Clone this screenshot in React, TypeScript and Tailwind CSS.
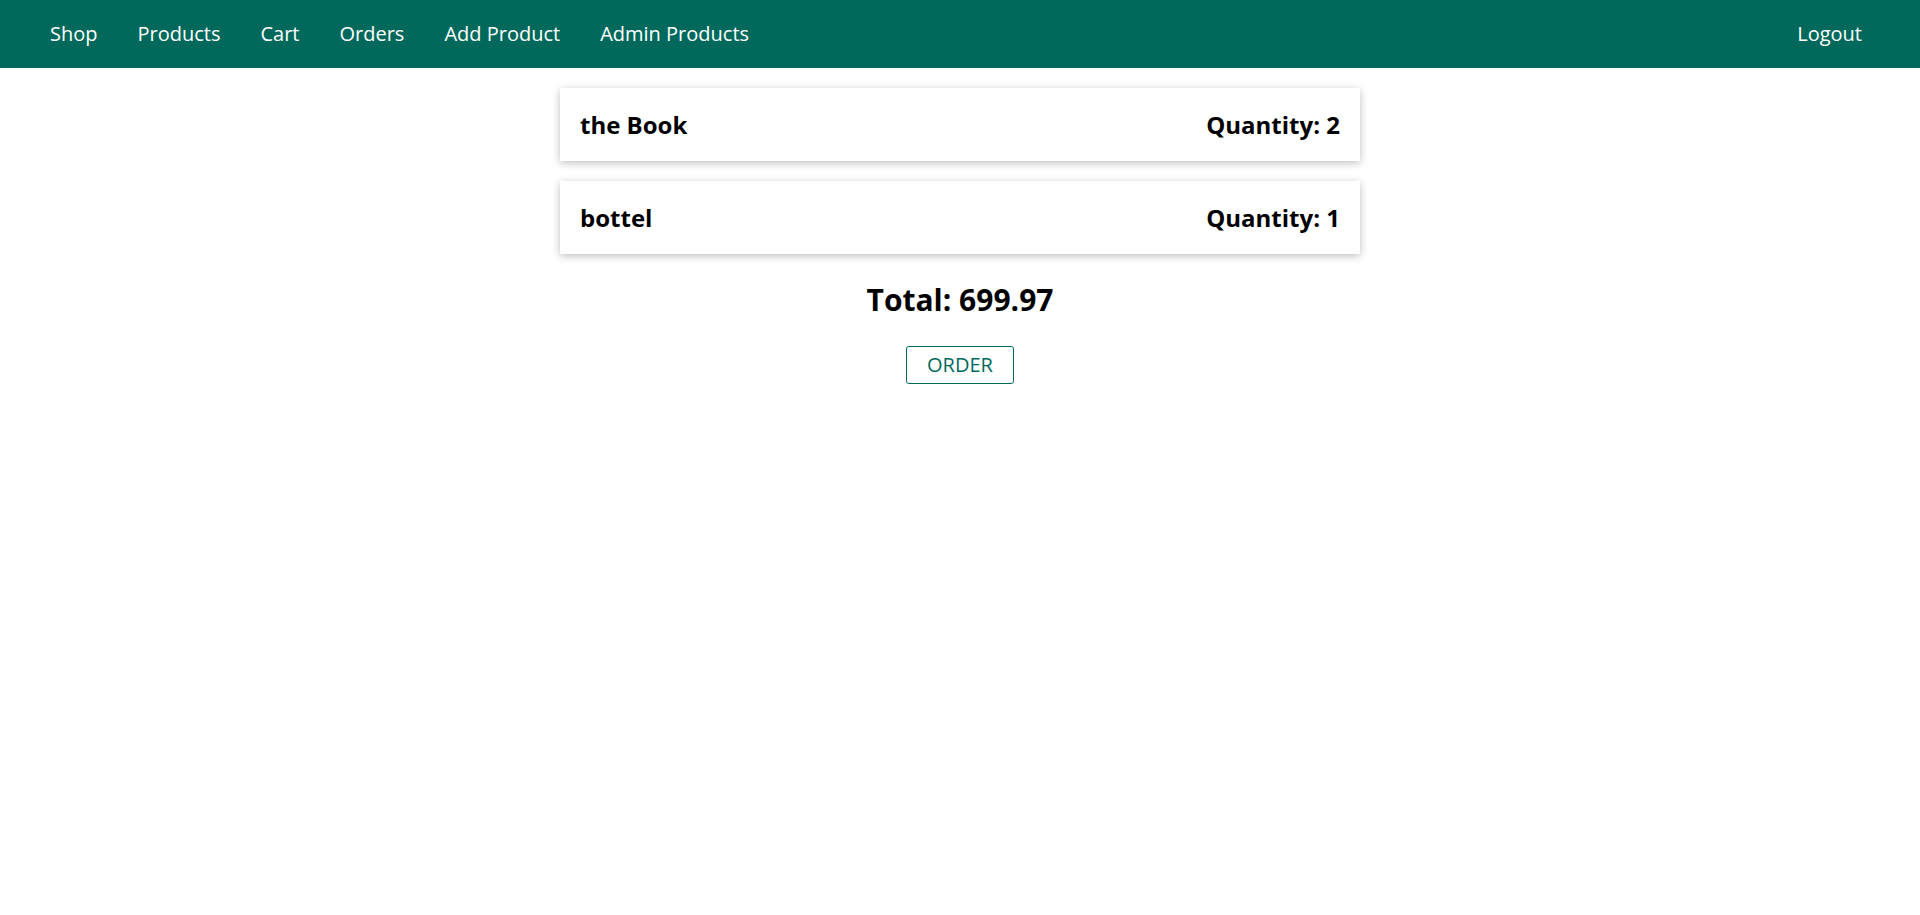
import React from 'react';

const navLinks = ['Shop', 'Products', 'Cart', 'Orders', 'Add Product', 'Admin Products'];

const cartItems = [
  { title: 'the Book', quantity: 2 },
  { title: 'bottel', quantity: 1 },
];

export default function App() {
  return (
    <div className="min-h-screen bg-white font-['Open_Sans',sans-serif] text-black">
      {/* Main header */}
      <header className="h-[68px] bg-[#00695c] flex items-center justify-between pl-[50px] pr-[58px]">
        <nav className="flex items-center gap-10">
          {navLinks.map((link) => (
            <a key={link} href="#" className="text-white text-[20px]">
              {link}
            </a>
          ))}
        </nav>
        <a href="#" className="text-white text-[20px]">
          Logout
        </a>
      </header>

      <main className="flex flex-col items-center">
        <ul className="w-[800px] mt-5 flex flex-col gap-5">
          {cartItems.map((item) => (
            <li
              key={item.title}
              className="h-[73px] flex items-center justify-between px-5 bg-white shadow-[0_2px_8px_rgba(0,0,0,0.26)]"
            >
              <h1 className="text-[24px] leading-[32px] font-bold">{item.title}</h1>
              <h2 className="text-[24px] leading-[32px] font-bold">Quantity: {item.quantity}</h2>
            </li>
          ))}
        </ul>

        <h2 className="mt-[26px] text-[30px] leading-[40px] font-bold">Total: 699.97</h2>

        <button className="mt-[26px] h-[38px] px-5 border border-[#00695c] rounded-[3px] text-[#00695c] text-[20px] leading-[28px] bg-white">
          ORDER
        </button>
      </main>
    </div>
  );
}
